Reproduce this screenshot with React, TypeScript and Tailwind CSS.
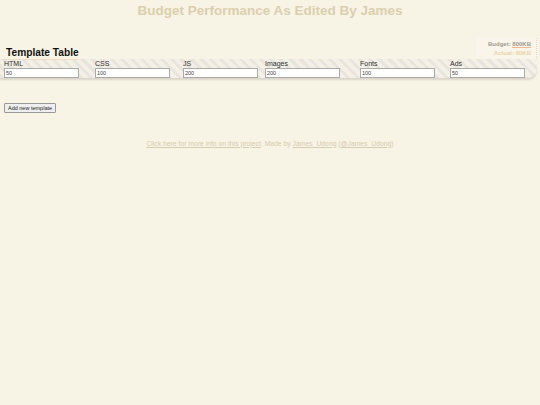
const columns = [
  { name: 'HTML', value: '50' },
  { name: 'CSS', value: '100' },
  { name: 'JS', value: '200' },
  { name: 'Images', value: '200' },
  { name: 'Fonts', value: '100' },
  { name: 'Ads', value: '50' },
];

export default function App() {
  return (
    <div className="min-h-[405px] w-full bg-[#f7f3e5] font-['Liberation_Sans',Arial,sans-serif] text-[#222]">
      <h1 className="pt-[3px] text-center text-[13.5px] leading-[16px] font-bold text-[#dccfae]">
        Budget Performance As Edited By James
      </h1>

      <div className="mt-[19px] flex items-end justify-between">
        <h2 className="ml-[6px] mb-[-1px] border-b border-[#f0dcc8] text-[10.2px] leading-[13px] font-bold text-[#111]">
          Template Table
        </h2>
        <div className="mr-[3px] flex flex-col items-end gap-[2px] border-r border-dotted border-[#e4dccb] bg-[#f9f5ea] pl-3 pr-[5px] pt-[3px] pb-[2px] text-[6px] leading-[7px] font-bold">
          <p className="text-[#a09a8e]">
            Budget: <span className="border-b border-[#f1b98e]">800KB</span>
          </p>
          <p className="text-[#ecd3a8]">Actual: 60KB</p>
        </div>
      </div>

      <div className="mr-[3px] grid grid-cols-[91px_88px_82px_95px_90px_1fr] rounded-r-[10px] bg-[repeating-linear-gradient(45deg,#e8e5de_0px,#e8e5de_3px,#f4f0e6_3px,#f4f0e6_7px)] pl-[4px] pt-[1px] shadow-[0_2px_2px_rgba(0,0,0,0.12)]">
        {columns.map((col) => (
          <label key={col.name} className="flex flex-col">
            <span className="text-[7px] leading-[8px] text-[#333]">{col.name}</span>
            <input
              defaultValue={col.value}
              className="h-[10px] w-[75px] border border-[#aaa] bg-white px-[1px] text-[5.5px] leading-[7px] text-[#444] outline-none"
            />
          </label>
        ))}
      </div>

      <button className="ml-[4px] mt-[25px] h-[10px] rounded-[1px] border border-[#999] bg-[#efefef] px-[3px] text-[5.5px] leading-[7px] text-[#222]">
        Add new template
      </button>

      <p className="mt-[22px] text-center text-[6.8px] leading-[9px] text-[#d6ccaf]">
        <a className="underline">Click here for more info on this project</a>. Made by{' '}
        <a className="underline">James_Udong</a> (<a className="underline">@James_Udong</a>)
      </p>
    </div>
  );
}
